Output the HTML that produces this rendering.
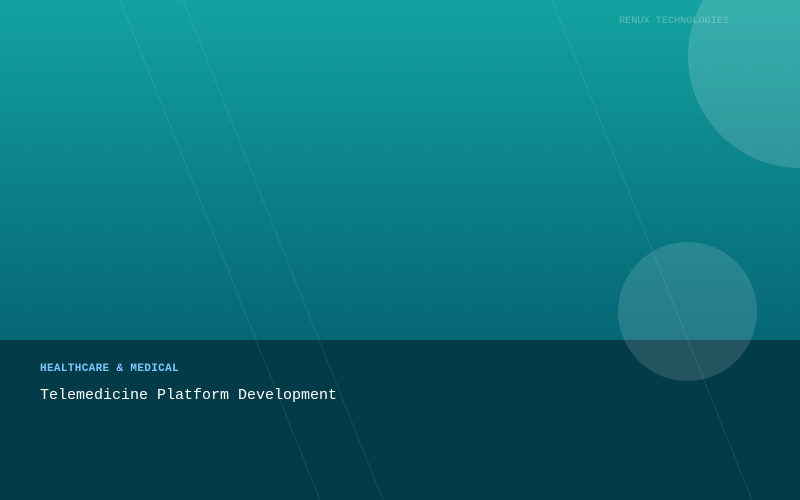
<!DOCTYPE html>
<html><head><meta charset="utf-8"><style>
html,body{margin:0;padding:0}
body{width:800px;height:500px;position:relative;overflow:hidden;background:linear-gradient(180deg,#13a3a0 0%,#0b8289 35%,#066775 68%);font-family:"Liberation Mono",monospace}
.dots{position:absolute;inset:0;background-image:radial-gradient(circle,rgba(255,255,255,0.06) 0.8px,transparent 1.2px);background-size:40px 40px;background-position:10px 10px}
.panel{position:absolute;left:0;top:340px;width:800px;height:160px;background:#043b48}
.c{position:absolute;border-radius:50%;background:rgba(255,255,255,0.15)}
svg{position:absolute;left:0;top:0}
.t{position:absolute;white-space:nowrap}
</style></head><body>
<div class="dots"></div>
<div class="panel"></div>
<div class="c" style="left:688px;top:-56px;width:224px;height:224px"></div>
<div class="c" style="left:618px;top:242px;width:139px;height:139px;background:rgba(255,255,255,0.13)"></div>
<svg width="800" height="500"><g stroke="rgba(255,255,255,0.09)" stroke-width="1"><line x1="120" y1="0" x2="320" y2="500"/><line x1="183" y1="0" x2="383" y2="500"/><line x1="552" y1="0" x2="752" y2="500"/></g></svg>
<div class="t" style="left:619px;top:16px;font-size:10.2px;color:rgba(255,255,255,0.3)">RENUX TECHNOLOGIES</div>
<div class="t" style="left:40px;top:363px;font-size:11px;letter-spacing:0.35px;font-weight:bold;color:#7cc8ff">HEALTHCARE &amp; MEDICAL</div>
<div class="t" style="left:40px;top:387px;font-size:15px;color:#fff">Telemedicine Platform Development</div>
</body></html>
